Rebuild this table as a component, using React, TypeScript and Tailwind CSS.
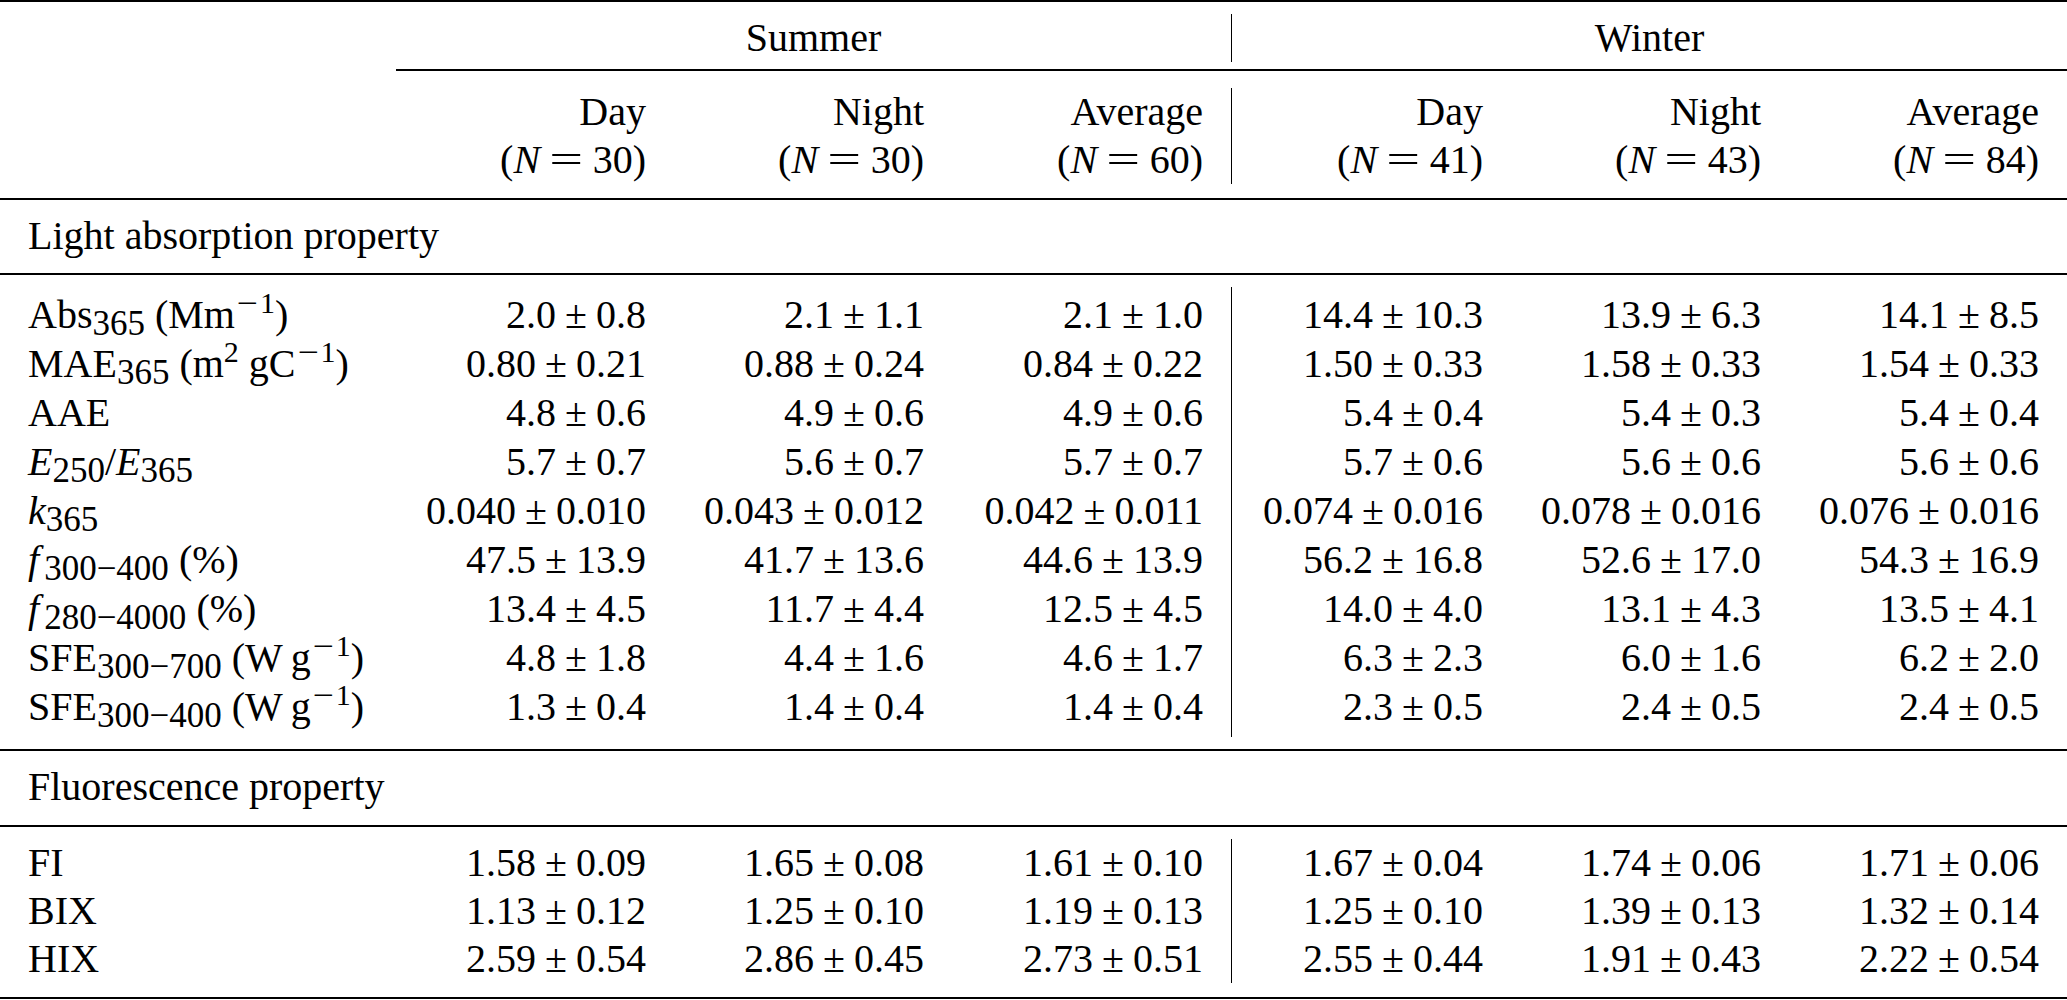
import React from "react";

type Row = { label: React.ReactNode; values: string[] };

const Sub = ({ children }: { children: React.ReactNode }) => (
  <span className="relative top-[7px] text-[35px] leading-none">{children}</span>
);

const Sup = ({ children }: { children: React.ReactNode }) => (
  <span className="relative -top-[15px] text-[30px] leading-none">{children}</span>
);

// superscript −1 with the wider TeX minus
const Inv = () => (
  <Sup>
    <span className="inline-block scale-x-125 mx-[4px]">−</span>1
  </Sup>
);

const Pm = ({ v }: { v: string }) => {
  const [a, b] = v.split("±");
  return (
    <span>
      {a}
      <span className="mx-[9px]">±</span>
      {b}
    </span>
  );
};

const NCount = ({ n }: { n: number }) => (
  <span>
    (<i>N</i>
    <span className="inline-block scale-x-150 mx-[15px]">=</span>
    {n})
  </span>
);

const absorption: Row[] = [
  {
    label: (
      <>
        Abs<Sub>365</Sub> (Mm<Inv />)
      </>
    ),
    values: ["2.0±0.8", "2.1±1.1", "2.1±1.0", "14.4±10.3", "13.9±6.3", "14.1±8.5"],
  },
  {
    label: (
      <>
        MAE<Sub>365</Sub> (m<Sup>2</Sup> gC<Inv />)
      </>
    ),
    values: ["0.80±0.21", "0.88±0.24", "0.84±0.22", "1.50±0.33", "1.58±0.33", "1.54±0.33"],
  },
  {
    label: "AAE",
    values: ["4.8±0.6", "4.9±0.6", "4.9±0.6", "5.4±0.4", "5.4±0.3", "5.4±0.4"],
  },
  {
    label: (
      <>
        <i>E</i>
        <Sub>250</Sub>/<i>E</i>
        <Sub>365</Sub>
      </>
    ),
    values: ["5.7±0.7", "5.6±0.7", "5.7±0.7", "5.7±0.6", "5.6±0.6", "5.6±0.6"],
  },
  {
    label: (
      <>
        <i>k</i>
        <Sub>365</Sub>
      </>
    ),
    values: ["0.040±0.010", "0.043±0.012", "0.042±0.011", "0.074±0.016", "0.078±0.016", "0.076±0.016"],
  },
  {
    label: (
      <>
        <i className="mr-[5px]">f</i>
        <Sub>300−400</Sub> (%)
      </>
    ),
    values: ["47.5±13.9", "41.7±13.6", "44.6±13.9", "56.2±16.8", "52.6±17.0", "54.3±16.9"],
  },
  {
    label: (
      <>
        <i className="mr-[5px]">f</i>
        <Sub>280−4000</Sub> (%)
      </>
    ),
    values: ["13.4±4.5", "11.7±4.4", "12.5±4.5", "14.0±4.0", "13.1±4.3", "13.5±4.1"],
  },
  {
    label: (
      <>
        SFE<Sub>300−700</Sub> (W<span className="ml-[8px]">g</span>
        <Inv />)
      </>
    ),
    values: ["4.8±1.8", "4.4±1.6", "4.6±1.7", "6.3±2.3", "6.0±1.6", "6.2±2.0"],
  },
  {
    label: (
      <>
        SFE<Sub>300−400</Sub> (W<span className="ml-[8px]">g</span>
        <Inv />)
      </>
    ),
    values: ["1.3±0.4", "1.4±0.4", "1.4±0.4", "2.3±0.5", "2.4±0.5", "2.4±0.5"],
  },
];

const fluorescence: Row[] = [
  { label: "FI", values: ["1.58±0.09", "1.65±0.08", "1.61±0.10", "1.67±0.04", "1.74±0.06", "1.71±0.06"] },
  { label: "BIX", values: ["1.13±0.12", "1.25±0.10", "1.19±0.13", "1.25±0.10", "1.39±0.13", "1.32±0.14"] },
  { label: "HIX", values: ["2.59±0.54", "2.86±0.45", "2.73±0.51", "2.55±0.44", "1.91±0.43", "2.22±0.54"] },
];

// widths of the six data columns; the 4th one carries the vertical rule
const dataCols = [
  "w-[278px] pr-[28px] text-right",
  "w-[278px] pr-[28px] text-right",
  "w-[279px] pr-[28px] text-right",
  "w-[280px] pr-[28px] text-right border-l border-black",
  "w-[278px] pr-[28px] text-right",
  "w-[278px] pr-[28px] text-right",
];

function DataBlock({ rows, tall }: { rows: Row[]; tall: boolean }) {
  const cell = tall ? "h-[49px] leading-[49px] whitespace-nowrap" : "h-[48px] leading-[48px] whitespace-nowrap";
  const inner = tall ? "pt-[3px] pb-[6px]" : "";
  return (
    <div className={tall ? "flex pt-[12px] pb-[12px]" : "flex pt-[12px] pb-[14px]"}>
      <div className={`w-[396px] pl-[28px] ${inner}`}>
        {rows.map((r, i) => (
          <div key={i} className={cell}>
            {r.label}
          </div>
        ))}
      </div>
      {dataCols.map((c, ci) => (
        <div key={ci} className={`${c} ${inner}`}>
          {rows.map((r, i) => (
            <div key={i} className={cell}>
              <Pm v={r.values[ci]} />
            </div>
          ))}
        </div>
      ))}
    </div>
  );
}

const Rule = () => <div className="h-[2px] bg-black" />;

const heads = [
  ["Day", 30],
  ["Night", 30],
  ["Average", 60],
  ["Day", 41],
  ["Night", 43],
  ["Average", 84],
] as const;

export default function App() {
  return (
    <div className="w-[2067px] bg-white font-['Liberation_Serif',serif] text-[40px] text-black">
      <Rule />

      {/* season header */}
      <div className="flex pt-[12px] pb-[7px]">
        <div className="w-[396px]" />
        <div className="w-[835px] h-[48px] leading-[48px] text-center">Summer</div>
        <div className="w-[836px] h-[48px] leading-[48px] text-center border-l border-black">Winter</div>
      </div>
      <div className="ml-[396px] h-[1.5px] bg-black" />

      {/* day / night / average */}
      <div className="flex pt-[17px] pb-[14px]">
        <div className="w-[396px]" />
        {heads.map(([name, n], i) => (
          <div key={i} className={dataCols[i]}>
            <div className="h-[48px] leading-[48px]">{name}</div>
            <div className="h-[48px] leading-[48px] whitespace-nowrap">
              <NCount n={n} />
            </div>
          </div>
        ))}
      </div>
      <Rule />

      <div className="pl-[28px] pt-[12px] pb-[13px] h-[73px] leading-[48px]">Light absorption property</div>
      <Rule />
      <DataBlock rows={absorption} tall />
      <Rule />

      <div className="pl-[28px] pt-[12px] pb-[14px] h-[74px] leading-[48px]">Fluorescence property</div>
      <Rule />
      <DataBlock rows={fluorescence} tall={false} />
      <Rule />
    </div>
  );
}
